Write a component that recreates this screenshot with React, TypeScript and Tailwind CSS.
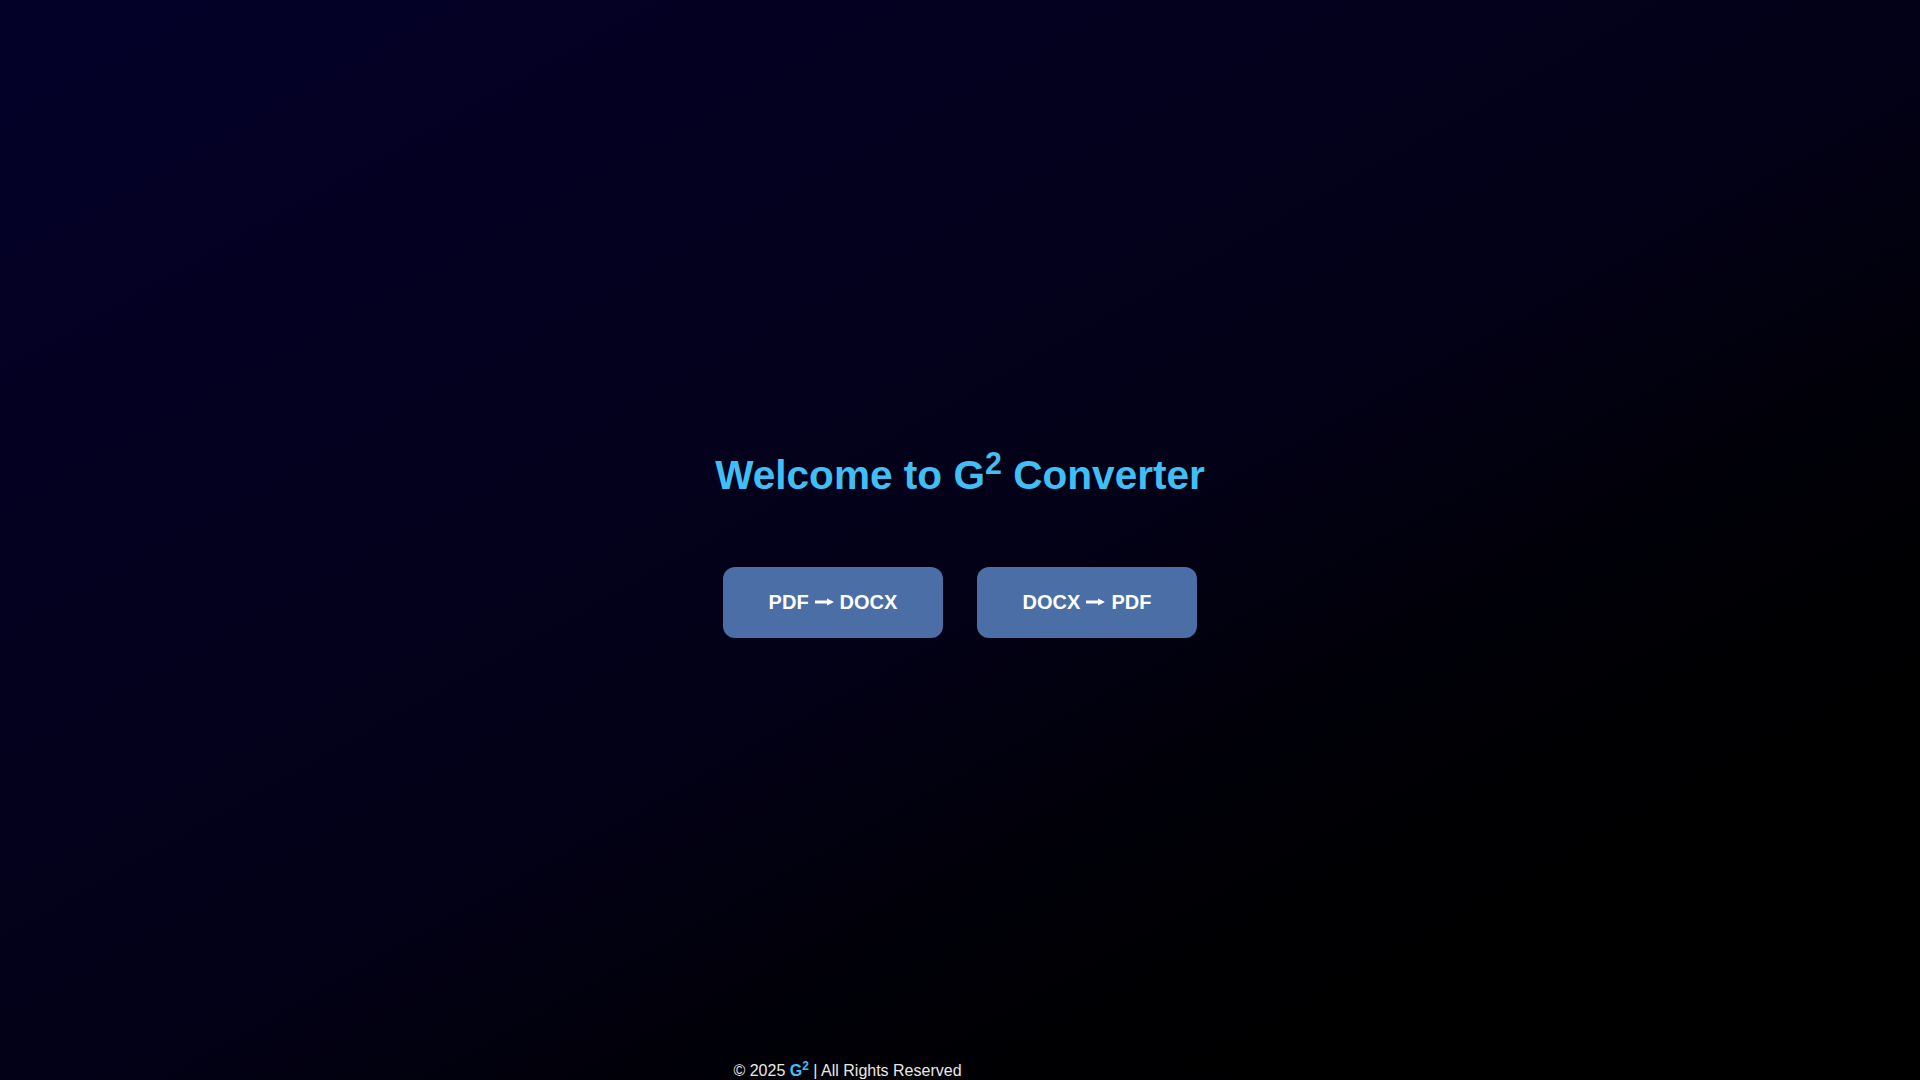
import React from 'react';

const G2 = () => (
  <span>
    G<sup>2</sup>
  </span>
);

const Arrow = () => (
  <svg width="19" height="10" viewBox="0 0 19 10" className="inline-block mx-[6px] align-[1px]" fill="white">
    <rect x="0" y="3.5" width="13" height="3" />
    <polygon points="12,1.5 19,5 12,8.5" />
  </svg>
);

export default function App() {
  return (
    <div className="min-h-screen flex flex-col bg-linear-to-br from-[#030029] via-[#030118] to-black font-['Liberation_Sans',Arial,sans-serif]">
      <main className="flex-1 flex flex-col items-center justify-center pt-[28px]">
        <h1 className="text-[40.6px] leading-[1.15] font-bold text-[#40bff5]">
          Welcome to <G2 /> Converter
        </h1>
        <div className="mt-[68px] flex gap-[34px]">
          <button className="w-[220px] h-[71px] rounded-xl bg-[#4a6ea5] text-white text-[20px] font-bold flex items-center justify-center">
            PDF<Arrow />DOCX
          </button>
          <button className="w-[220px] h-[71px] rounded-xl bg-[#4a6ea5] text-white text-[20px] font-bold flex items-center justify-center">
            DOCX<Arrow />PDF
          </button>
        </div>
      </main>
      <footer className="pr-[225px] text-center text-[16px] leading-[1.15] text-[#e8e8e8]">
        © 2025 <span className="text-[#40bff5] font-bold"><G2 /></span> | All Rights Reserved
      </footer>
    </div>
  );
}
